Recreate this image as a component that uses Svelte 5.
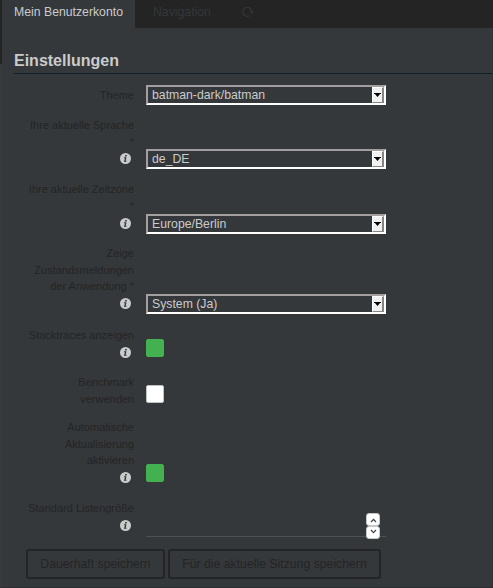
<script>
  const rows = [
    { lines: ['Theme'], h: 30, top: 0, type: 'select', value: 'batman-dark/batman' },
    { lines: ['Ihre aktuelle Sprache', '*'], info: true, h: 64, top: 34, type: 'select', value: 'de_DE' },
    { lines: ['Ihre aktuelle Zeitzone', '*'], info: true, h: 64, top: 35, gap: 4, type: 'select', value: 'Europe/Berlin' },
    { lines: ['Zeige', 'Zustandsmeldungen', 'der Anwendung *'], info: true, h: 82, top: 51, type: 'select', value: 'System (Ja)' },
    { lines: ['Stacktraces anzeigen'], info: true, h: 47, top: 14, type: 'check', on: true },
    { lines: ['Benchmark', 'verwenden'], h: 45, top: 13, type: 'check', on: false },
    { lines: ['Automatische', 'Aktualisierung', 'aktivieren'], info: true, h: 81, top: 47, type: 'check', on: true },
    { lines: ['Standard Listengröße'], info: true, h: 51, top: 15, type: 'spin' }
  ];
</script>

<div class="page">
  <div class="edge"></div>
  <div class="main">
    <nav>
      <div class="tab active">Mein Benutzerkonto</div>
      <div class="tab">Navigation</div>
      <svg class="reload" width="12" height="12" viewBox="0 0 12 12">
        <path d="M7.3 9.8A4.5 4.5 0 1 1 9.8 6" fill="none" stroke="#34383b" stroke-width="1.1" />
        <path d="M7.8 5.5h3.9L9.8 7.8z" fill="#34383b" />
      </svg>
    </nav>
    <h1>Einstellungen</h1>
    <form>
      {#each rows as row}
        <div class="row" style="height: {row.h}px">
          <div class="label">
            {#each row.lines as line}<div>{line}</div>{/each}
            {#if row.info}
              <svg class="info" style="margin-top: {row.gap ?? 3}px" width="11" height="11" viewBox="0 0 11 11">
                <circle cx="5.5" cy="5.5" r="5.5" fill="#cbcbcb" />
                <path d="M5.2 1.9h1.7l-.3 1.5H4.9zM4 4.3h2.5L5.7 7.8h.9L6.4 8.8H3.8l.2-1h.3l.6-2.5h-1z" fill="#34383b" />
              </svg>
            {/if}
          </div>
          <div class="control" style="padding-top: {row.top}px">
            {#if row.type === 'select'}
              <div class="select">
                <span>{row.value}</span>
                <div class="arrow">
                  <svg width="7" height="4" viewBox="0 0 7 4"><path d="M0 0h7v1H6L3.5 4 1 1H0z" fill="#000" /></svg>
                </div>
              </div>
            {:else if row.type === 'check'}
              <div class="check" class:on={row.on}></div>
            {:else}
              <div class="spin">
                <div class="steps">
                  <div class="step"><svg width="7" height="5" viewBox="0 0 7 5"><path d="M1 4l2.5-2.6L6 4" fill="none" stroke="#444" stroke-width="1.3" /></svg></div>
                  <div class="step down"><svg width="7" height="5" viewBox="0 0 7 5"><path d="M1 1l2.5 2.6L6 1" fill="none" stroke="#444" stroke-width="1.3" /></svg></div>
                </div>
              </div>
            {/if}
          </div>
        </div>
      {/each}
      <div class="buttons">
        <button type="button" class="save">Dauerhaft speichern</button>
        <button type="button" class="session">Für die aktuelle Sitzung speichern</button>
      </div>
    </form>
  </div>
</div>

<style>
  .page {
    display: flex;
    width: 493px;
    height: 588px;
    overflow: hidden;
    box-sizing: border-box;
    background: #34383b;
    border-bottom: 1px solid #2c2e32;
    font: 12.25px "Liberation Sans", Arial, sans-serif;
    color: #cbcbcb;
  }
  .edge {
    width: 2px;
    background: linear-gradient(#242424 64px, #393a3b 64px);
  }
  .main { flex: 1; border-right: 1px solid #303335; }
  nav {
    display: flex;
    height: 28px;
    background: #242424;
    margin-right: -1px;
  }
  .tab {
    padding: 0 18px;
    line-height: 24px;
    color: #34383b;
  }
  .tab.active {
    width: 133px;
    box-sizing: border-box;
    padding: 0 0 0 12px;
    white-space: nowrap;
    background: #34383b;
    color: #cbcbcb;
  }
  .reload { margin-top: 6px; margin-left: 13px; }
  h1 {
    height: 46px;
    margin: 0 0 11px 12px;
    padding-top: 23px;
    box-sizing: border-box;
    border-bottom: 1px solid #0c2027;
    font-size: 16px;
    line-height: 20px;
  }
  .row { display: flex; }
  .label {
    width: 132px;
    padding-top: 2px;
    margin-right: 12px;
    text-align: right;
    font-size: 11px;
    line-height: 16.5px;
    color: #242424;
    white-space: nowrap;
  }
  .info { display: block; margin: 0 3px 0 auto; }
  .control { width: 240px; }
  .select {
    display: flex;
    justify-content: space-between;
    height: 20px;
    box-sizing: border-box;
    border: 2px solid;
    border-color: #a19f9f #fff #fff #a19f9f;
    padding-left: 4px;
    line-height: 17px;
  }
  .arrow {
    display: flex;
    align-items: center;
    justify-content: center;
    width: 12px;
    box-sizing: border-box;
    background: #f1f1f1;
    border: 1px solid;
    border-color: #fff #858585 #858585 #fff;
    border-right-width: 2px;
  }
  .arrow svg { flex: none; }
  .check {
    width: 18px;
    height: 18px;
    box-sizing: border-box;
    border: 1px solid #bfc1c5;
    border-radius: 2px;
    background: #fff;
  }
  .check.on { background: #43b14f; border-color: #43b14f; }
  .spin {
    display: flex;
    justify-content: flex-end;
    height: 24px;
    box-sizing: border-box;
    border-bottom: 1px solid #505050;
    padding-right: 6px;
  }
  .steps { width: 14px; height: 26px; }
  .step {
    display: flex;
    align-items: center;
    justify-content: center;
    height: 13px;
    box-sizing: border-box;
    background: #fff;
    border: 1px solid #c6c8cc;
    border-radius: 3px;
  }
  .step:first-child { padding-top: 1px; }
  .step.down { padding-bottom: 3px; }
  .buttons { display: flex; gap: 3px; margin-left: 24px; }
  button {
    height: 30px;
    padding: 0;
    border: 2px solid #242424;
    border-radius: 3px;
    background: transparent;
    color: #242424;
    font: inherit;
    white-space: nowrap;
  }
  .save { width: 139px; }
  .session { width: 213px; }
</style>
